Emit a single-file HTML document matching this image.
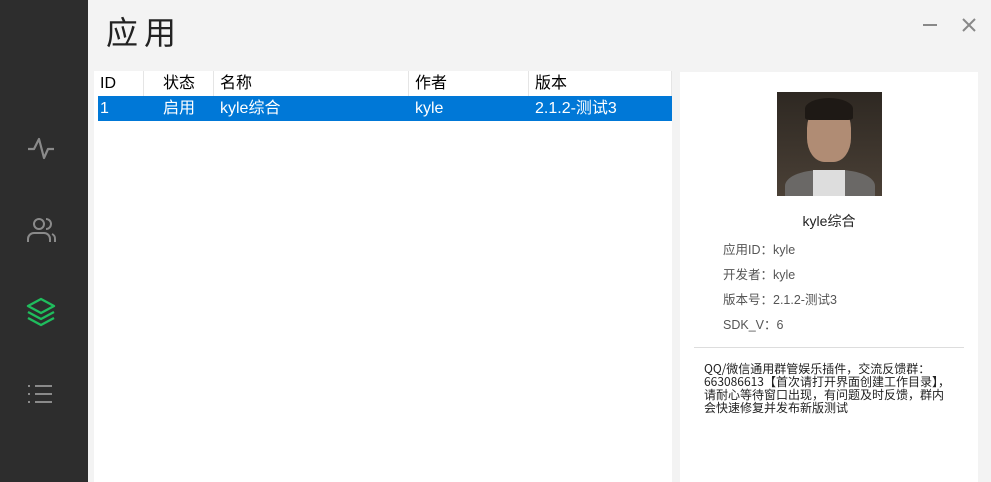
<!DOCTYPE html>
<html><head><meta charset="utf-8"><style>
*{margin:0;padding:0;box-sizing:border-box}
body{width:991px;height:482px;background:#f3f3f3;font-family:"Liberation Sans","Noto Sans CJK SC",sans-serif;position:relative;overflow:hidden}
.side{position:absolute;left:0;top:0;width:88px;height:482px;background:#2d2d2d}
.side svg{position:absolute;left:26px}
.title{position:absolute;left:106px;top:8px;font-size:32px;color:#222;letter-spacing:6px;font-family:"Noto Sans CJK SC",sans-serif}
.tbl{position:absolute;left:94px;top:71px;width:578px;height:411px;background:#fff}
.hd,.row{position:absolute;left:4px;width:574px;height:25px;font-size:16px;font-family:"Liberation Sans","Noto Sans CJK SC",sans-serif}
.hd{top:0;color:#000}
.row{top:25px;background:#0078d7;color:#fff}
.hd span,.row span{position:absolute;top:2px;line-height:22px}
.sep{position:absolute;top:0;width:1px;height:25px;background:#e5e5e5}
.rp{position:absolute;left:680px;top:72px;width:298px;height:410px;background:#fff}
.av{position:absolute;left:97px;top:20px;width:105px;height:104px;background:linear-gradient(#2e2822,#4a4036);overflow:hidden}
.info{position:absolute;left:43px;font-size:12.5px;color:#555;font-family:"Liberation Sans","Noto Sans CJK SC",sans-serif}
.desc{position:absolute;left:24px;top:290px;width:270px;font-size:12px;line-height:13px;color:#222;font-family:"Noto Sans CJK SC",sans-serif;white-space:nowrap}
</style></head><body>
<div class="side">
<svg style="top:135px" width="30" height="28" viewBox="0 0 30 28"><path d="M2 14h6l5-10 5 19 4-9h6" fill="none" stroke="#8a8a8a" stroke-width="2.2" stroke-linejoin="round"/></svg>
<svg style="top:215px" width="32" height="30" viewBox="0 0 32 30"><circle cx="13" cy="9" r="5" fill="none" stroke="#8a8a8a" stroke-width="2"/><path d="M2 27v-3a6 6 0 0 1 6-6h10a6 6 0 0 1 6 6v3M20 4a5 5 0 0 1 0 10M26 19a5 5 0 0 1 3 5v3" fill="none" stroke="#8a8a8a" stroke-width="2"/></svg>
<svg style="top:297px" width="30" height="30" viewBox="0 0 30 30"><path d="M15 2l13 7-13 7-13-7z" fill="none" stroke="#1fbd5d" stroke-width="2.4" stroke-linejoin="round"/><path d="M2 15l13 7 13-7M2 21l13 7 13-7" fill="none" stroke="#1fbd5d" stroke-width="2.4" stroke-linejoin="round"/></svg>
<svg style="top:383px" width="30" height="24" viewBox="0 0 30 24"><g fill="#8a8a8a"><rect x="2" y="2" width="2" height="2"/><rect x="2" y="10" width="2" height="2"/><rect x="2" y="18" width="2" height="2"/><rect x="9" y="2" width="17" height="2"/><rect x="9" y="10" width="17" height="2"/><rect x="9" y="18" width="17" height="2"/></g></svg>
</div>
<div class="title">应用</div>
<svg style="position:absolute;left:922px;top:18px" width="56" height="14"><path d="M1 7h14" stroke="#888" stroke-width="2"/><path d="M41 1l12 12M53 1l-12 12" stroke="#888" stroke-width="2"/></svg>
<div class="tbl">
<div class="hd"><span style="left:2px">ID</span><i class="sep" style="left:45px"></i><span style="left:65px">状态</span><i class="sep" style="left:115px"></i><span style="left:122px">名称</span><i class="sep" style="left:310px"></i><span style="left:317px">作者</span><i class="sep" style="left:430px"></i><span style="left:437px">版本</span><i class="sep" style="left:573px"></i></div>
<div class="row"><span style="left:2px">1</span><span style="left:65px">启用</span><span style="left:122px">kyle综合</span><span style="left:317px">kyle</span><span style="left:437px">2.1.2-测试3</span></div>
</div>
<div class="rp">
<div class="av">
<div style="position:absolute;left:30px;top:10px;width:44px;height:60px;border-radius:45% 45% 40% 40%;background:#b08c74"></div>
<div style="position:absolute;left:28px;top:6px;width:48px;height:22px;border-radius:50% 50% 10% 10%;background:#1e1915"></div>
<div style="position:absolute;left:8px;top:78px;width:90px;height:40px;border-radius:40% 40% 0 0;background:#6a6866"></div>
<div style="position:absolute;left:36px;top:78px;width:32px;height:30px;background:#ddd"></div>
</div>
<div style="position:absolute;left:0;width:298px;top:139px;text-align:center;font-size:14px;color:#222">kyle综合</div>
<div class="info" style="top:167px">应用ID：kyle</div>
<div class="info" style="top:192px">开发者：kyle</div>
<div class="info" style="top:217px">版本号：2.1.2-测试3</div>
<div class="info" style="top:242px">SDK_V：6</div>
<div style="position:absolute;left:14px;top:275px;width:270px;height:1px;background:#ddd"></div>
<div class="desc">QQ/微信通用群管娱乐插件，交流反馈群：<br>663086613【首次请打开界面创建工作目录】，<br>请耐心等待窗口出现，有问题及时反馈，群内<br>会快速修复并发布新版测试</div>
</div>
</body></html>
